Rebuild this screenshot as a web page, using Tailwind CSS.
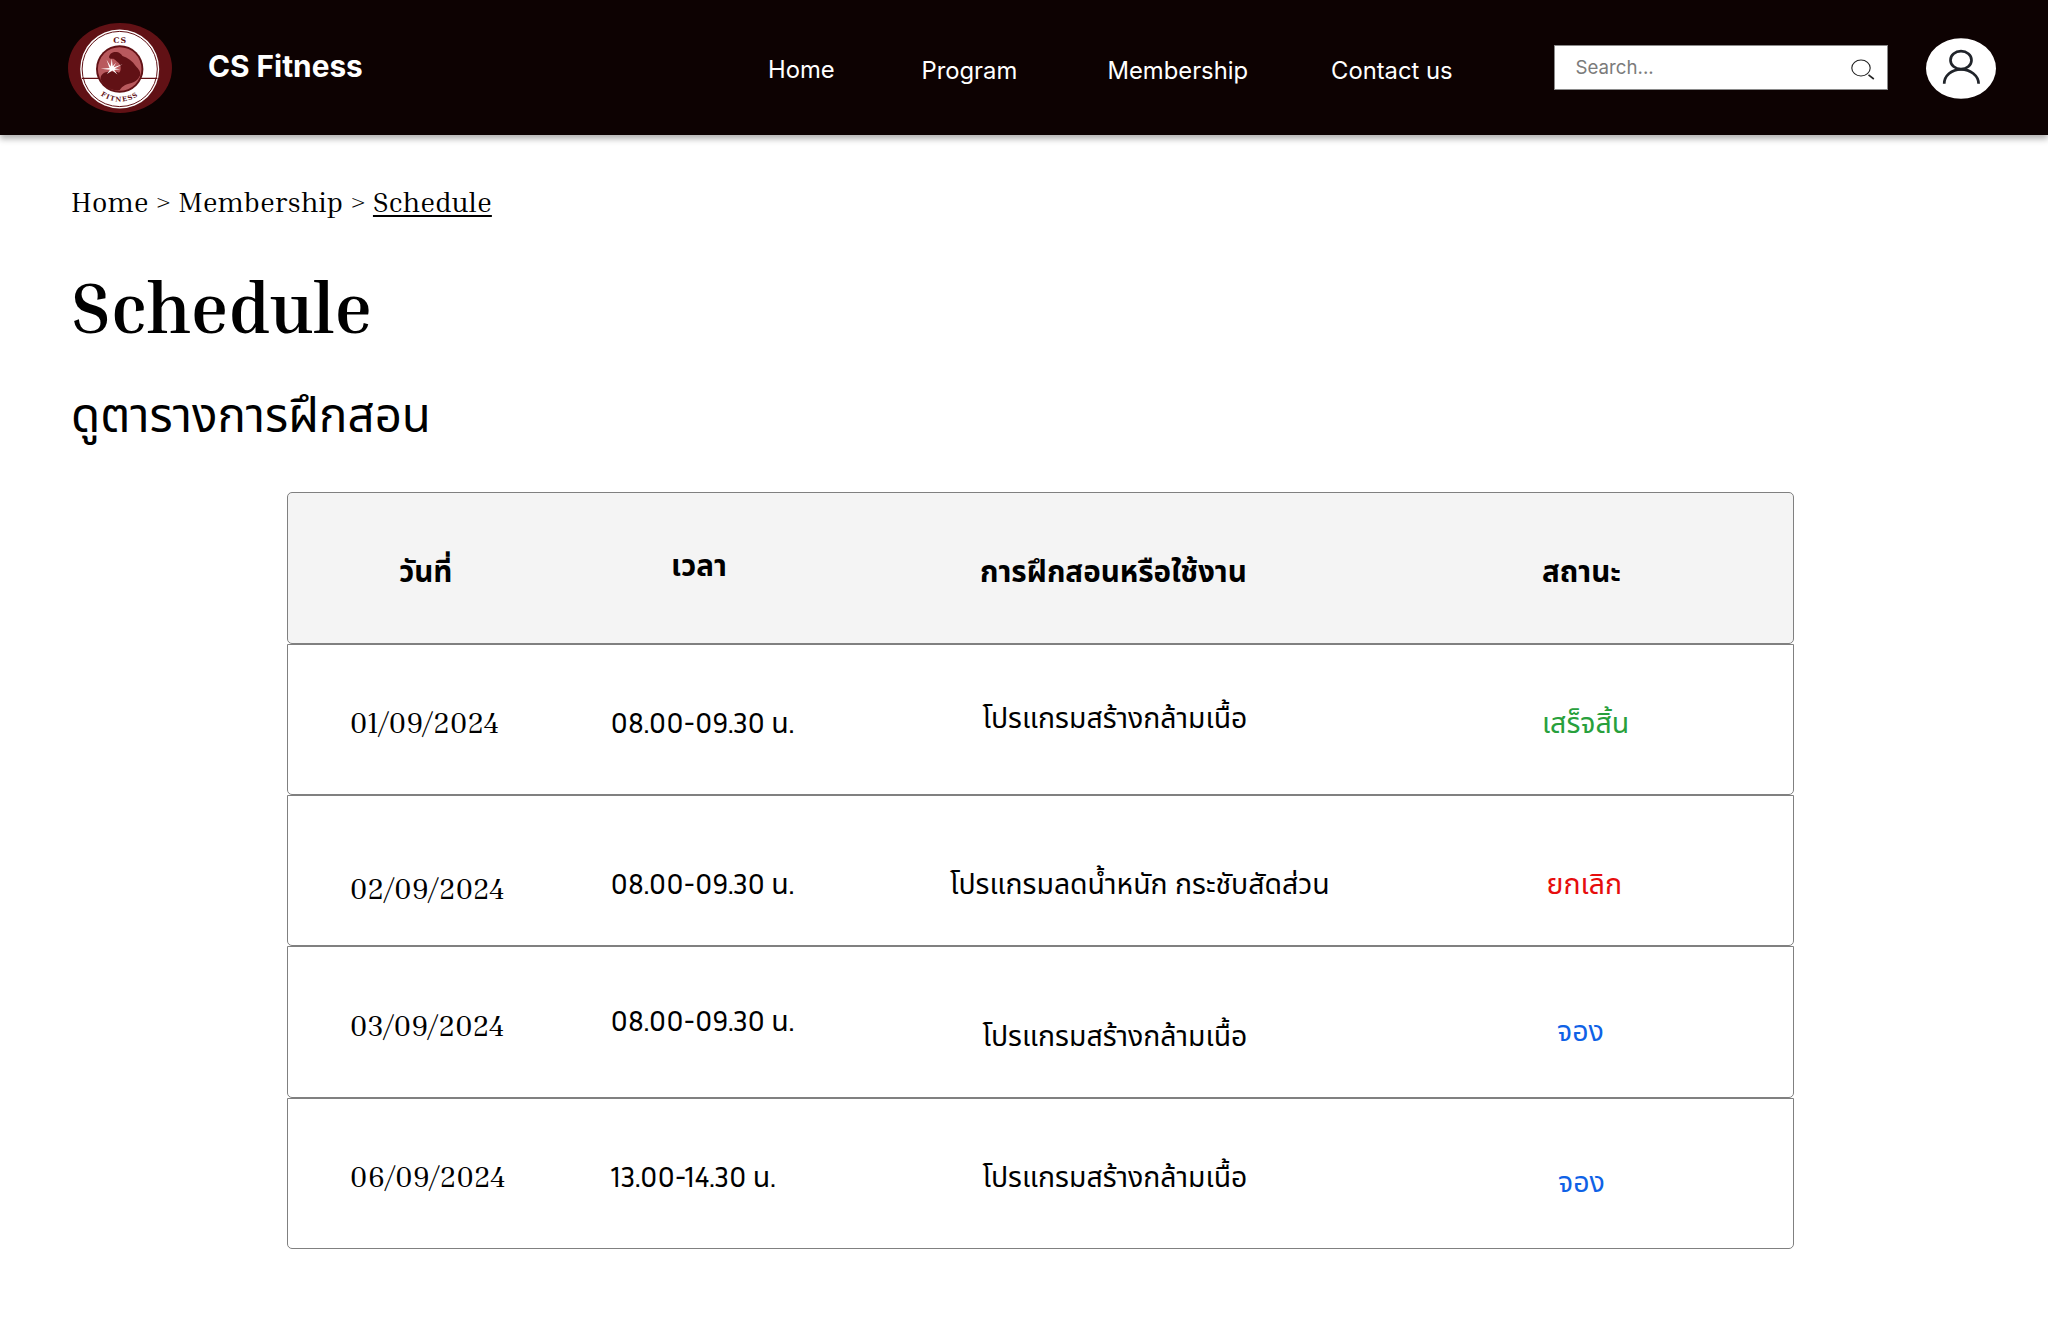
<!DOCTYPE html>
<html lang="th">
<head>
<meta charset="utf-8">
<title>CS Fitness – Schedule</title>
<script src="https://cdn.jsdelivr.net/npm/@tailwindcss/browser@4"></script>
</head>
<body class="min-h-screen bg-white text-black">
<header class="flex h-[135px] items-center bg-[#0d0202] text-white shadow-[0_4px_6px_rgba(0,0,0,0.3)]">
  <div class="flex w-[768px] shrink-0 items-center pl-[68px]">
    <svg class="mt-px h-[90px] w-[104px]" viewBox="0 0 104 90">
      <ellipse cx="52" cy="45" rx="52" ry="45" fill="#611115"/>
      <circle cx="51.7" cy="46" r="39.500" fill="#fff"/>
      <circle cx="51.7" cy="46" r="37.600" fill="none" stroke="#611115" stroke-width="1"/>
      <path d="M14 55.300h75.400" stroke="#611115" stroke-width="1.200"/>
      <circle cx="51.700" cy="46" r="23.700" fill="#611115"/>
      <circle cx="51.700" cy="46" r="21.800" fill="#b9595d"/>
      <path d="M41 34C41.500 30.500 45 28.500 49 29c2.500.4 4 2 5.500 4 5 1.500 10 5 13.200 10 3 3 5.300 6 4.300 9.500-2 4.500-5 6.500-8.500 7.500-5 1.200-9 2.500-12 7.300-4.500.5-9-.8-12.500-3-3.500-2.200-6-6-6.500-9 .5-4 4-6.300 8-6.500 3-.2 7-.6 10.500 1 2-1.500 2.300-5.500.7-8.500-1.600-2.200-3.800-3.800-6.200-5.600-2.500.4-5 0-4.500-2.700z" fill="#611115"/>
      <path d="M41.300 44.500 38.500 36.500l4.200 7 1-8 1 7.800 3.300-3.500-2.300 4.400 8.800-3-7.800 4.200 5.300.8-5.800.8 3.300 4.500-5.200-4-5.300 3.500 3-4.200-9.200-1 9-.700-5-4z" fill="#fff"/>
      <text x="52.200" y="20" text-anchor="middle" font-family="DejaVu Serif, serif" font-weight="700" font-size="7.800" letter-spacing="1" fill="#611115">CS</text>
      <path id="arc" d="M19.200 46a32.500 32.500 0 0 0 65 0" fill="none"/>
      <text font-family="DejaVu Serif, serif" font-weight="700" font-size="6.600" letter-spacing="1.100" fill="#611115" text-anchor="middle"><textPath href="#arc" startOffset="50%">FITNESS</textPath></text>
    </svg>
    <span class="mb-px ml-[36px] font-['Inter',sans-serif] text-[29.800px] leading-none font-bold whitespace-nowrap">CS Fitness</span>
  </div>
  <nav class="grid w-[786px] shrink-0 grid-cols-[153.500px_186px_223.500px_auto] items-center font-['Inter',sans-serif] text-[23.800px] leading-none whitespace-nowrap">
    <a class="mt-[5px]">Home</a>
    <a class="mt-[7px]">Program</a>
    <a class="mt-[7px]">Membership</a>
    <a class="mt-[7px]">Contact us</a>
  </nav>
  <div class="flex h-[45px] w-[334px] shrink-0 items-center justify-between border border-[#8a8a8a] bg-white pr-[12px] pl-[20.500px]">
    <span class="mt-[2px] font-['Inter',sans-serif] text-[18.700px] leading-none text-[#7b7b7b]">Search...</span>
    <svg class="mt-[2px] h-[22px] w-[24px]" viewBox="0 0 24 22" fill="none" stroke="#222" stroke-width="1.100"><ellipse cx="10" cy="10" rx="9.200" ry="8"/><path d="M17.500 16.800l5.300 4.200" stroke-width="1.600"/></svg>
  </div>
  <svg class="mt-[2px] ml-[38px] h-[61px] w-[70px] shrink-0" viewBox="0 0 70 61"><ellipse cx="35" cy="30.500" rx="35" ry="30.300" fill="#fff"/><g fill="none" stroke="#20242a" stroke-width="2.700"><ellipse cx="35" cy="22.200" rx="10.500" ry="9"/><path d="M18.200 45.800C18.200 37.600 25.700 31.300 35 31.300S52.600 37.600 52.600 45.800"/></g></svg>
</header>
<main>
  <div class="pl-[71px] font-['Inria_Serif','Noto_Serif_Display',serif]">
    <nav class="pt-[46px] text-[28.450px] leading-[40px]">Home &gt; Membership &gt; <span class="underline decoration-[1.500px] underline-offset-[3px]">Schedule</span></nav>
    <h1 class="pt-[41px] text-[71.200px] leading-[90px] font-bold">Schedule</h1>
  </div>
  <p class="pt-[36px] pl-[71px] font-['Noto_Sans_Thai','Noto_Sans',sans-serif] text-[47.400px] leading-[60px]">ดูตารางการฝึกสอน</p>
  <section class="mt-[44px] ml-[287px] w-[1507px] font-['Noto_Sans_Thai','Noto_Sans',sans-serif] text-[28.400px] leading-[40px] whitespace-nowrap">
    <div class="grid h-[152px] grid-cols-[283px_340px_579px_auto] items-start rounded-[5px] border-[1.500px] border-[#808080] bg-[#f4f4f4] text-[29.600px] font-bold">
      <span class="pt-[60px] pl-[111px]">วันที่</span>
      <span class="pt-[54px] pl-[100px]">เวลา</span>
      <span class="pt-[60px] pl-[69px]">การฝึกสอนหรือใช้งาน</span>
      <span class="pt-[60px] pl-[52px]">สถานะ</span>
    </div>
    <div class="grid h-[151px] grid-cols-[283px_340px_579px_auto] items-start rounded-b-[5px] border-[1.500px] border-[#808080]">
      <span class="pt-[57px] pl-[61.500px] font-['Inria_Serif','Noto_Serif_Display',serif] text-[29.700px]">01/09/2024</span>
      <span class="pt-[57px] pl-[39.500px] font-['Inria_Sans','Noto_Sans_Thai',sans-serif] text-[28.500px]">08.00-09.30 น.</span>
      <span class="pt-[55px] pl-[71.500px]">โปรแกรมสร้างกล้ามเนื้อ</span>
      <span class="pt-[60px] pl-[52px] text-[28.500px] text-[#28a03c]">เสร็จสิ้น</span>
    </div>
    <div class="grid h-[151px] grid-cols-[283px_340px_579px_auto] items-start rounded-b-[5px] border-[1.500px] border-[#808080]">
      <span class="pt-[72px] pl-[61.500px] font-['Inria_Serif','Noto_Serif_Display',serif] text-[29.700px]">02/09/2024</span>
      <span class="pt-[67px] pl-[39.500px] font-['Inria_Sans','Noto_Sans_Thai',sans-serif] text-[28.500px]">08.00-09.30 น.</span>
      <span class="pt-[70px] pl-[39px]">โปรแกรมลดน้ำหนัก กระชับสัดส่วน</span>
      <span class="pt-[70px] pl-[56.500px] text-[28.500px] text-[#e60d0d]">ยกเลิก</span>
    </div>
    <div class="grid h-[152px] grid-cols-[283px_340px_579px_auto] items-start rounded-b-[5px] border-[1.500px] border-[#808080]">
      <span class="pt-[58px] pl-[61.500px] font-['Inria_Serif','Noto_Serif_Display',serif] text-[29.700px]">03/09/2024</span>
      <span class="pt-[53px] pl-[39.500px] font-['Inria_Sans','Noto_Sans_Thai',sans-serif] text-[28.500px]">08.00-09.30 น.</span>
      <span class="pt-[71px] pl-[71.500px]">โปรแกรมสร้างกล้ามเนื้อ</span>
      <span class="pt-[66px] pl-[67px] text-[28.500px] text-[#0f62e6]">จอง</span>
    </div>
    <div class="grid h-[151px] grid-cols-[283px_340px_579px_auto] items-start rounded-b-[5px] border-[1.500px] border-[#808080]">
      <span class="pt-[57px] pl-[61.500px] font-['Inria_Serif','Noto_Serif_Display',serif] text-[29.700px]">06/09/2024</span>
      <span class="pt-[57px] pl-[39.500px] font-['Inria_Sans','Noto_Sans_Thai',sans-serif] text-[28.500px]">13.00-14.30 น.</span>
      <span class="pt-[60px] pl-[71.500px]">โปรแกรมสร้างกล้ามเนื้อ</span>
      <span class="pt-[65px] pl-[68px] text-[28.500px] text-[#0f62e6]">จอง</span>
    </div>
  </section>
</main>
</body>
</html>
